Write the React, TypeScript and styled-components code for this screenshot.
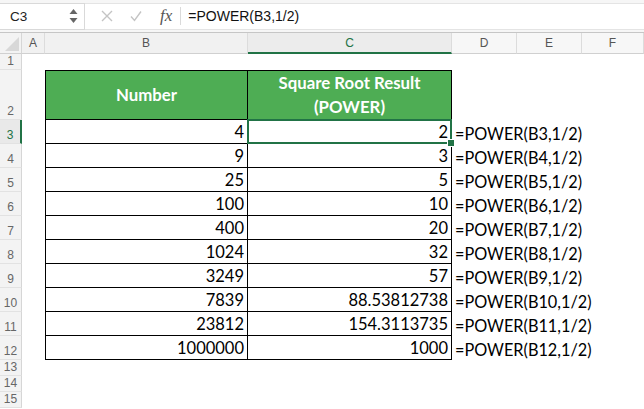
import React from 'react';
import styled, { createGlobalStyle, css } from 'styled-components';

const GlobalStyle = createGlobalStyle`
  html, body {
    margin: 0;
    padding: 0;
    background: #ffffff;
  }
  body {
    width: 644px;
    height: 409px;
    overflow: hidden;
    font-family: "Liberation Sans", Arial, sans-serif;
  }
`;

const Window = styled.div`
  width: 644px;
  height: 409px;
  display: flex;
  flex-direction: column;
  background: #fff;
  overflow: hidden;
`;

const FormulaBar = styled.div`
  height: 33px;
  box-sizing: border-box;
  display: flex;
  align-items: center;
  background: #f6f6f6;
  border-bottom: 1px solid #c6c6c6;
  padding: 2px 0 2px 0;
`;

const NameBox = styled.div`
  width: 85px;
  height: 27px;
  box-sizing: border-box;
  display: flex;
  align-items: center;
  justify-content: space-between;
  background: #fff;
  border: 1px solid #d9d9d9;
  border-left: none;
  padding: 0 6px 0 10px;
  font-size: 13.5px;
  color: #222;
`;

const Stepper = styled.svg`
  width: 9px;
  height: 16px;
`;

const BarTools = styled.div`
  height: 27px;
  flex: 1;
  display: flex;
  align-items: center;
  background: #fff;
  border-top: 1px solid #e4e4e4;
  border-bottom: 1px solid #e4e4e4;
  box-sizing: border-box;
`;

const ToolIcon = styled.svg<{ $gap: number }>`
  width: 12px;
  height: 12px;
  margin-left: ${(p) => p.$gap}px;
`;

const Fx = styled.span`
  font-family: "Liberation Serif", "DejaVu Serif", serif;
  font-style: italic;
  font-size: 17px;
  color: #555;
  margin-left: 18px;
  padding-right: 8px;
  border-right: 1px solid #dadada;
  line-height: 18px;
`;

const FormulaText = styled.span`
  font-size: 14px;
  color: #111;
  margin-left: 7px;
`;

const Sheet = styled.div`
  display: grid;
  grid-template-columns: 22px 23px 203px 204px 65px 65px 1fr;
  grid-template-rows: 21px 16px 50px repeat(10, 24px) 16px 16px 16px;
  flex: 1;
`;

const Corner = styled.div`
  background: #f3f3f3;
  border-right: 1px solid #d6d6d6;
  border-bottom: 1px solid #d0d0d0;
  display: flex;
  align-items: flex-end;
  justify-content: flex-end;
  padding: 0 2px 2px 0;
`;

const ColHead = styled.div<{ $active?: boolean; $dim?: boolean }>`
  background: ${(p) => (p.$dim ? '#f7f7f7' : '#f1f1f1')};
  border-right: 1px solid #dcdcdc;
  border-bottom: 1px solid #d0d0d0;
  display: flex;
  align-items: center;
  justify-content: center;
  font-size: 12px;
  color: #555;
  ${(p) =>
    p.$active &&
    css`
      color: #217346;
      border-bottom: 2px solid #217346;
      background: #ececec;
    `}
`;

const RowHead = styled.div<{ $active?: boolean }>`
  background: #f3f3f3;
  border-right: 1px solid #d6d6d6;
  border-bottom: 1px solid #e2e2e2;
  display: flex;
  align-items: flex-end;
  justify-content: center;
  padding-bottom: 1px;
  font-size: 12px;
  color: #666;
  box-sizing: border-box;
  ${(p) =>
    p.$active &&
    css`
      color: #217346;
      border-right: 2px solid #217346;
      background: #e9e9e9;
    `}
`;

const Blank = styled.div<{ $span?: number }>`
  grid-column: span ${(p) => p.$span ?? 1};
`;

const HeadCell = styled.div<{ $first?: boolean }>`
  background: #4ead54;
  color: #fff;
  font-family: "Lato", "Liberation Sans", sans-serif;
  font-weight: 700;
  font-size: 16.8px;
  line-height: 24px;
  text-align: center;
  display: flex;
  align-items: center;
  justify-content: center;
  border-top: 1px solid #000;
  border-right: 1px solid #000;
  border-bottom: 1px solid #000;
  ${(p) => p.$first && css`border-left: 1px solid #000;`}
`;

const Cell = styled.div<{ $first?: boolean; $selected?: boolean }>`
  position: relative;
  display: flex;
  align-items: flex-end;
  justify-content: flex-end;
  padding: 0 3px 1px 0;
  font-family: "Lato", "Liberation Sans", sans-serif;
  font-size: 16.5px;
  color: #000;
  border-right: 1px solid #000;
  border-bottom: 1px solid #000;
  ${(p) => p.$first && css`border-left: 1px solid #000;`}
  ${(p) =>
    p.$selected &&
    css`
      &::after {
        content: '';
        position: absolute;
        left: -1px;
        top: -1px;
        right: -1px;
        bottom: -1px;
        border: 2px solid #217346;
      }
      &::before {
        content: '';
        position: absolute;
        right: -4px;
        bottom: -4px;
        width: 6px;
        height: 6px;
        background: #217346;
        border: 1px solid #fff;
        z-index: 2;
      }
    `}
`;

const Formula = styled.div`
  grid-column: span 3;
  display: flex;
  align-items: flex-end;
  padding: 0 0 1px 3px;
  font-family: "Lato", "Liberation Sans", sans-serif;
  font-size: 16.3px;
  color: #000;
  white-space: nowrap;
`;

const rows = [
  ['4', '2'],
  ['9', '3'],
  ['25', '5'],
  ['100', '10'],
  ['400', '20'],
  ['1024', '32'],
  ['3249', '57'],
  ['7839', '88.53812738'],
  ['23812', '154.3113735'],
  ['1000000', '1000'],
];

const cols = ['A', 'B', 'C', 'D', 'E', 'F'];

export default function App() {
  return (
    <Window>
      <GlobalStyle />
      <FormulaBar>
        <NameBox>
          <span>C3</span>
          <Stepper viewBox="0 0 9 16">
            <path d="M4.5 1 L8.5 6 L0.5 6 Z" fill="#666" />
            <path d="M4.5 15 L8.5 10 L0.5 10 Z" fill="#666" />
          </Stepper>
        </NameBox>
        <BarTools>
          <ToolIcon viewBox="0 0 12 12" $gap={16}>
            <path d="M1 1 L11 11 M11 1 L1 11" stroke="#c4c4c4" strokeWidth="1.4" fill="none" />
          </ToolIcon>
          <ToolIcon viewBox="0 0 12 12" $gap={17}>
            <path d="M1 6.5 L4.5 10.5 L11 1.5" stroke="#c4c4c4" strokeWidth="1.4" fill="none" />
          </ToolIcon>
          <Fx>fx</Fx>
          <FormulaText>=POWER(B3,1/2)</FormulaText>
        </BarTools>
      </FormulaBar>
      <Sheet>
        <Corner>
          <svg width="14" height="14" viewBox="0 0 14 14">
            <path d="M14 0 L14 14 L0 14 Z" fill="#d8d8d8" />
          </svg>
        </Corner>
        {cols.map((c) => (
          <ColHead key={c} $active={c === 'C'} $dim={c === 'D' || c === 'E' || c === 'F'}>
            {c}
          </ColHead>
        ))}

        <RowHead>1</RowHead>
        <Blank $span={6} />

        <RowHead>2</RowHead>
        <Blank />
        <HeadCell $first>Number</HeadCell>
        <HeadCell>
          Square Root Result
          <br />
          (POWER)
        </HeadCell>
        <Blank $span={3} />

        {rows.map(([n, r], i) => (
          <React.Fragment key={i}>
            <RowHead $active={i === 0}>{i + 3}</RowHead>
            <Blank />
            <Cell $first>{n}</Cell>
            <Cell $selected={i === 0}>{r}</Cell>
            <Formula>=POWER(B{i + 3},1/2)</Formula>
          </React.Fragment>
        ))}

        {[13, 14, 15].map((n) => (
          <React.Fragment key={n}>
            <RowHead>{n}</RowHead>
            <Blank $span={6} />
          </React.Fragment>
        ))}
      </Sheet>
    </Window>
  );
}
